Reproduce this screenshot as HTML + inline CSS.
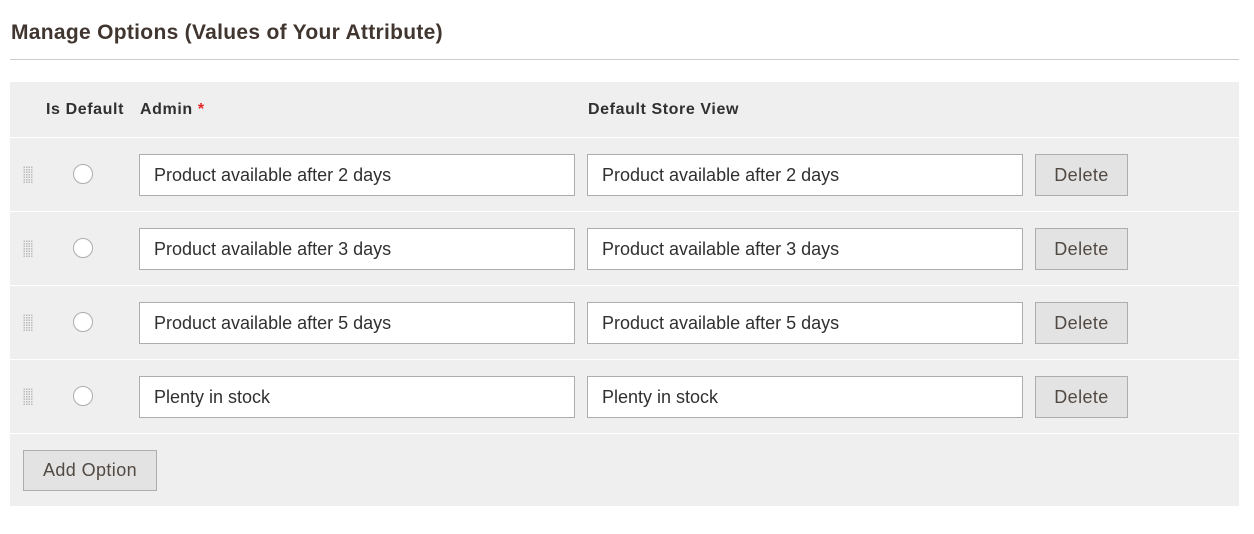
<!DOCTYPE html>
<html><head><style>
body{margin:0;background:#fff;font-family:"Liberation Sans",sans-serif;color:#303030;}
.t{position:absolute;left:11px;top:21px;font-size:21px;font-weight:bold;letter-spacing:0.3px;color:#41362f}
.hr{position:absolute;left:10px;top:59px;width:1229px;height:1px;background:#ccc}
.panel{position:absolute;left:10px;top:82px;width:1229px;height:424px;background:#efefef}
.h{position:absolute;top:101px;font-size:16px;font-weight:bold;letter-spacing:0.6px;color:#303030}
.sep{position:absolute;left:10px;width:1229px;height:1px;background:#fff}
.in{position:absolute;border:1px solid #adadad;background:#fff;font-size:18px;line-height:40px;padding-left:14px;box-sizing:border-box;width:436px;height:42px;color:#303030}
.btn{position:absolute;background:#e3e3e3;border:1px solid #adadad;box-sizing:border-box;font-size:18px;text-align:center;color:#514943;letter-spacing:0.4px}
.r{position:absolute;left:73px;width:20px;height:20px;border:1px solid #adadad;border-radius:50%;background:#fff;box-sizing:border-box}
.d{position:absolute;left:23px;width:10px;height:17px;background-image:radial-gradient(circle,#bbb 0.9px,transparent 1px);background-size:2.5px 2.5px}
</style></head><body>
<div class="t">Manage Options (Values of Your Attribute)</div>
<div class="hr"></div>
<div class="panel"></div>
<div class="h" style="left:46px">Is Default</div>
<div class="h" style="left:140px">Admin <span style="color:#e22626">*</span></div>
<div class="h" style="left:588px">Default Store View</div>

<div class="sep" style="top:137px"></div>
<div class="d" style="top:166px"></div><div class="r" style="top:164px"></div>
<div class="in" style="left:139px;top:154px">Product available after 2 days</div>
<div class="in" style="left:587px;top:154px">Product available after 2 days</div>
<div class="btn" style="left:1035px;top:154px;width:93px;height:42px;line-height:40px">Delete</div>

<div class="sep" style="top:211px"></div>
<div class="d" style="top:240px"></div><div class="r" style="top:238px"></div>
<div class="in" style="left:139px;top:228px">Product available after 3 days</div>
<div class="in" style="left:587px;top:228px">Product available after 3 days</div>
<div class="btn" style="left:1035px;top:228px;width:93px;height:42px;line-height:40px">Delete</div>

<div class="sep" style="top:285px"></div>
<div class="d" style="top:314px"></div><div class="r" style="top:312px"></div>
<div class="in" style="left:139px;top:302px">Product available after 5 days</div>
<div class="in" style="left:587px;top:302px">Product available after 5 days</div>
<div class="btn" style="left:1035px;top:302px;width:93px;height:42px;line-height:40px">Delete</div>

<div class="sep" style="top:359px"></div>
<div class="d" style="top:388px"></div><div class="r" style="top:386px"></div>
<div class="in" style="left:139px;top:376px">Plenty in stock</div>
<div class="in" style="left:587px;top:376px">Plenty in stock</div>
<div class="btn" style="left:1035px;top:376px;width:93px;height:42px;line-height:40px">Delete</div>

<div class="sep" style="top:433px"></div>
<div class="btn" style="left:23px;top:450px;width:134px;height:41px;line-height:39px">Add Option</div>
</body></html>
